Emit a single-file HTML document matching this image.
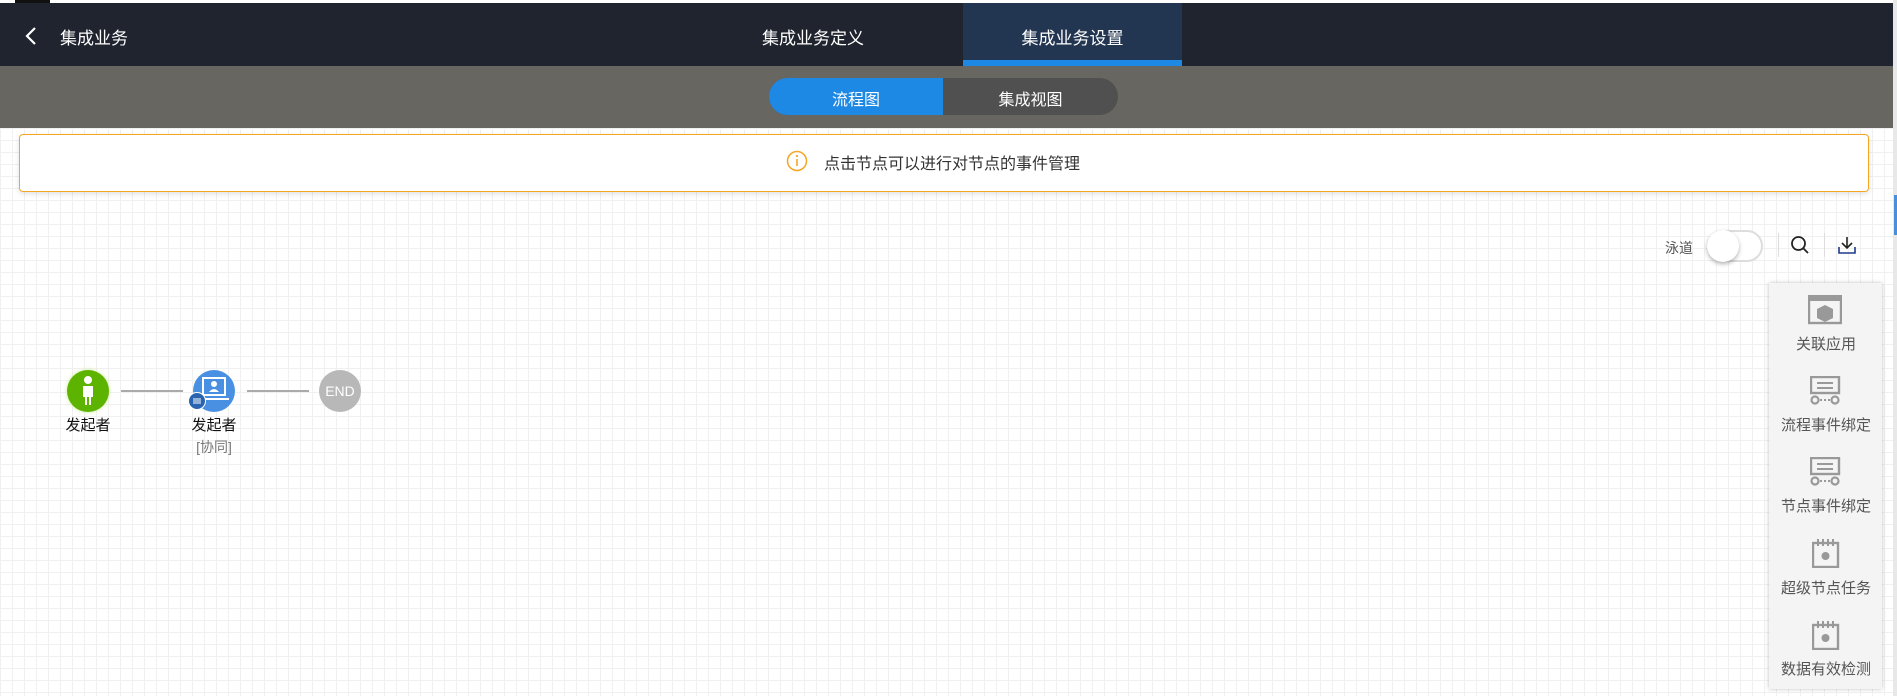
<!DOCTYPE html>
<html><head><meta charset="utf-8"><style>
*{margin:0;padding:0;box-sizing:border-box}
body{width:1897px;height:696px;overflow:hidden;position:relative;font-family:"Liberation Sans","Noto Sans CJK SC",sans-serif;background:#fff}
.hdr{position:absolute;left:0;top:3px;width:1893px;height:63px;background:#20242f;color:#fff;font-size:17px}
.bar{position:absolute;left:0;top:66px;width:1893px;height:62px;background:#686660}
.canvas{position:absolute;left:0;top:128px;width:1893px;height:568px;background-color:#fff;background-image:linear-gradient(#f0f0f0 1px,transparent 1px),linear-gradient(90deg,#f0f0f0 1px,transparent 1px);background-size:12px 12px}
.abs{position:absolute}
.lbl{position:absolute;font-size:15px;color:#555;width:120px;text-align:center;left:1766px}
</style></head><body>
<div class="abs" style="left:15px;top:0;width:35px;height:3px;background:#111"></div>
<div class="abs" style="left:1893px;top:0;width:4px;height:696px;background:#e8e8e8"></div>
<div class="abs" style="left:1894px;top:195px;width:3px;height:40px;background:#4a90d9"></div>
<div class="hdr">
 <svg class="abs" style="left:24px;top:23px" width="14" height="20"><path d="M11 2 L3 10 L11 18" stroke="#fff" stroke-width="2.2" fill="none"/></svg>
 <div class="abs" style="left:60px;top:21px">集成业务</div>
 <div class="abs" style="left:762px;top:21px">集成业务定义</div>
 <div class="abs" style="left:963px;top:0;width:219px;height:63px;background:#233651"></div>
 <div class="abs" style="left:963px;top:57px;width:219px;height:6px;background:#1e88e5"></div>
 <div class="abs" style="left:963px;top:21px;width:219px;text-align:center">集成业务设置</div>
</div>
<div class="bar">
 <div class="abs" style="left:769px;top:12px;width:349px;height:37px;border-radius:19px;background:#505050;overflow:hidden">
  <div style="position:absolute;left:0;top:0;width:174px;height:37px;background:#1e88e5"></div>
  <div style="position:absolute;left:0;top:8px;width:174px;text-align:center;color:#fff;font-size:16px">流程图</div>
  <div style="position:absolute;left:174px;top:8px;width:175px;text-align:center;color:#fff;font-size:16px">集成视图</div>
 </div>
</div>
<div class="canvas"></div>
<div class="abs" style="left:19px;top:134px;width:1850px;height:58px;background:#fff;border:1px solid #f5a623;border-radius:4px;box-shadow:0 2px 6px rgba(0,0,0,.12)">
 <svg class="abs" style="left:766px;top:15px" width="22" height="22"><circle cx="11" cy="11" r="9.5" stroke="#f5a623" stroke-width="1.5" fill="none"/><line x1="11" y1="9" x2="11" y2="16" stroke="#f5a623" stroke-width="1.6"/><circle cx="11" cy="6" r="1.1" fill="#f5a623"/></svg>
 <div class="abs" style="left:804px;top:15px;font-size:16px;color:#333">点击节点可以进行对节点的事件管理</div>
</div>
<div class="abs" style="left:1665px;top:238px;font-size:14px;color:#555">泳道</div>
<div class="abs" style="left:1707px;top:230px;width:56px;height:32px;border-radius:16px;background:#fff;border:2px solid #ddd"></div>
<div class="abs" style="left:1707px;top:230px;width:32px;height:32px;border-radius:16px;background:#fff;box-shadow:0 2px 4px rgba(0,0,0,.3)"></div>
<div class="abs" style="left:1778px;top:233px;width:1px;height:24px;background:#ddd"></div>
<div class="abs" style="left:1824px;top:233px;width:1px;height:24px;background:#ddd"></div>
<svg class="abs" style="left:1790px;top:235px" width="20" height="20"><circle cx="8.5" cy="8.5" r="6.5" stroke="#222" stroke-width="1.8" fill="none"/><line x1="13" y1="13" x2="18" y2="18" stroke="#222" stroke-width="1.8"/></svg>
<svg class="abs" style="left:1837px;top:235px" width="20" height="20"><path d="M10 2 V13 M5 8 L10 13 L15 8" stroke="#222" stroke-width="1.6" fill="none"/><path d="M2 12 V18 H18 V12" stroke="#1e3a8a" stroke-width="1.6" fill="none"/></svg>
<div class="abs" style="left:1769px;top:283px;width:113px;height:406px;background:#f4f4f4;box-shadow:0 0 4px rgba(0,0,0,.25)"></div>
<svg class="abs" style="left:1808px;top:295px" width="34" height="30"><rect x="1" y="1" width="32" height="27" fill="none" stroke="#999" stroke-width="2.4"/><rect x="1" y="1" width="32" height="5" fill="#999"/><path d="M17 10 L25 14 L25 23 L17 27 L9 23 L9 14Z" fill="#999"/></svg>
<div class="lbl" style="top:333px">关联应用</div>
<svg class="abs" style="left:1810px;top:376px" width="32" height="30"><rect x="1" y="1" width="28" height="16" fill="none" stroke="#999" stroke-width="2.4"/><line x1="7" y1="7" x2="23" y2="7" stroke="#999" stroke-width="2"/><line x1="7" y1="12" x2="23" y2="12" stroke="#999" stroke-width="2"/><circle cx="5" cy="24" r="3.5" fill="none" stroke="#999" stroke-width="2.2"/><circle cx="25" cy="24" r="3.5" fill="none" stroke="#999" stroke-width="2.2"/><line x1="10" y1="24" x2="20" y2="24" stroke="#999" stroke-width="2" stroke-dasharray="2 2"/></svg>
<div class="lbl" style="top:414px">流程事件绑定</div>
<svg class="abs" style="left:1810px;top:457px" width="32" height="30"><rect x="1" y="1" width="28" height="16" fill="none" stroke="#999" stroke-width="2.4"/><line x1="7" y1="7" x2="23" y2="7" stroke="#999" stroke-width="2"/><line x1="7" y1="12" x2="23" y2="12" stroke="#999" stroke-width="2"/><circle cx="5" cy="24" r="3.5" fill="none" stroke="#999" stroke-width="2.2"/><circle cx="25" cy="24" r="3.5" fill="none" stroke="#999" stroke-width="2.2"/><line x1="10" y1="24" x2="20" y2="24" stroke="#999" stroke-width="2" stroke-dasharray="2 2"/></svg>
<div class="lbl" style="top:495px">节点事件绑定</div>
<svg class="abs" style="left:1812px;top:538px" width="28" height="30"><rect x="1" y="5" width="25" height="24" fill="none" stroke="#999" stroke-width="2.4"/><path d="M6 1 V8 M11 1 V8 M16 1 V8 M21 1 V8" stroke="#999" stroke-width="2"/><circle cx="13.5" cy="18" r="4" fill="#999"/></svg>
<div class="lbl" style="top:577px">超级节点任务</div>
<svg class="abs" style="left:1812px;top:620px" width="28" height="30"><rect x="1" y="5" width="25" height="24" fill="none" stroke="#999" stroke-width="2.4"/><path d="M6 1 V8 M11 1 V8 M16 1 V8 M21 1 V8" stroke="#999" stroke-width="2"/><circle cx="13.5" cy="18" r="4" fill="#999"/></svg>
<div class="lbl" style="top:658px">数据有效检测</div>
<div class="abs" style="left:121px;top:390px;width:62px;height:2px;background:#aaa"></div>
<div class="abs" style="left:247px;top:390px;width:62px;height:2px;background:#aaa"></div>
<div class="abs" style="left:67px;top:370px;width:42px;height:42px;border-radius:50%;background:#5cb300;box-shadow:0 0 4px #cfe89a"></div>
<svg class="abs" style="left:78px;top:375px" width="20" height="32"><circle cx="10" cy="5" r="4" fill="#fff"/><path d="M5 11 H15 V22 H13 V30 H11 V22 H9 V30 H7 V22 H5Z" fill="#fff"/></svg>
<div class="abs" style="left:193px;top:370px;width:42px;height:42px;border-radius:50%;background:#4a90e2"></div>
<svg class="abs" style="left:201px;top:377px" width="28" height="26"><rect x="2" y="1" width="22" height="17" fill="none" stroke="#fff" stroke-width="2"/><circle cx="13" cy="7" r="3" fill="#fff"/><path d="M8 15 Q13 9 18 15Z" fill="#fff"/><line x1="0" y1="22" x2="28" y2="22" stroke="#fff" stroke-width="2"/></svg>
<div class="abs" style="left:188px;top:392px;width:18px;height:18px;border-radius:50%;background:#2a64b0;border:1px solid #fff"></div>
<svg class="abs" style="left:192px;top:396px" width="10" height="10"><path d="M1 3H9M1 5H9M1 7H9" stroke="#fff" stroke-width="1"/></svg>
<div class="abs" style="left:319px;top:370px;width:42px;height:42px;border-radius:50%;background:#b8b8b8;color:#fff;font-size:14px;text-align:center;line-height:42px">END</div>
<div class="abs" style="left:58px;top:414px;width:60px;text-align:center;font-size:15px;color:#111">发起者</div>
<div class="abs" style="left:184px;top:414px;width:60px;text-align:center;font-size:15px;color:#111">发起者</div>
<div class="abs" style="left:184px;top:437px;width:60px;text-align:center;font-size:14px;color:#777">[协同]</div>
</body></html>
